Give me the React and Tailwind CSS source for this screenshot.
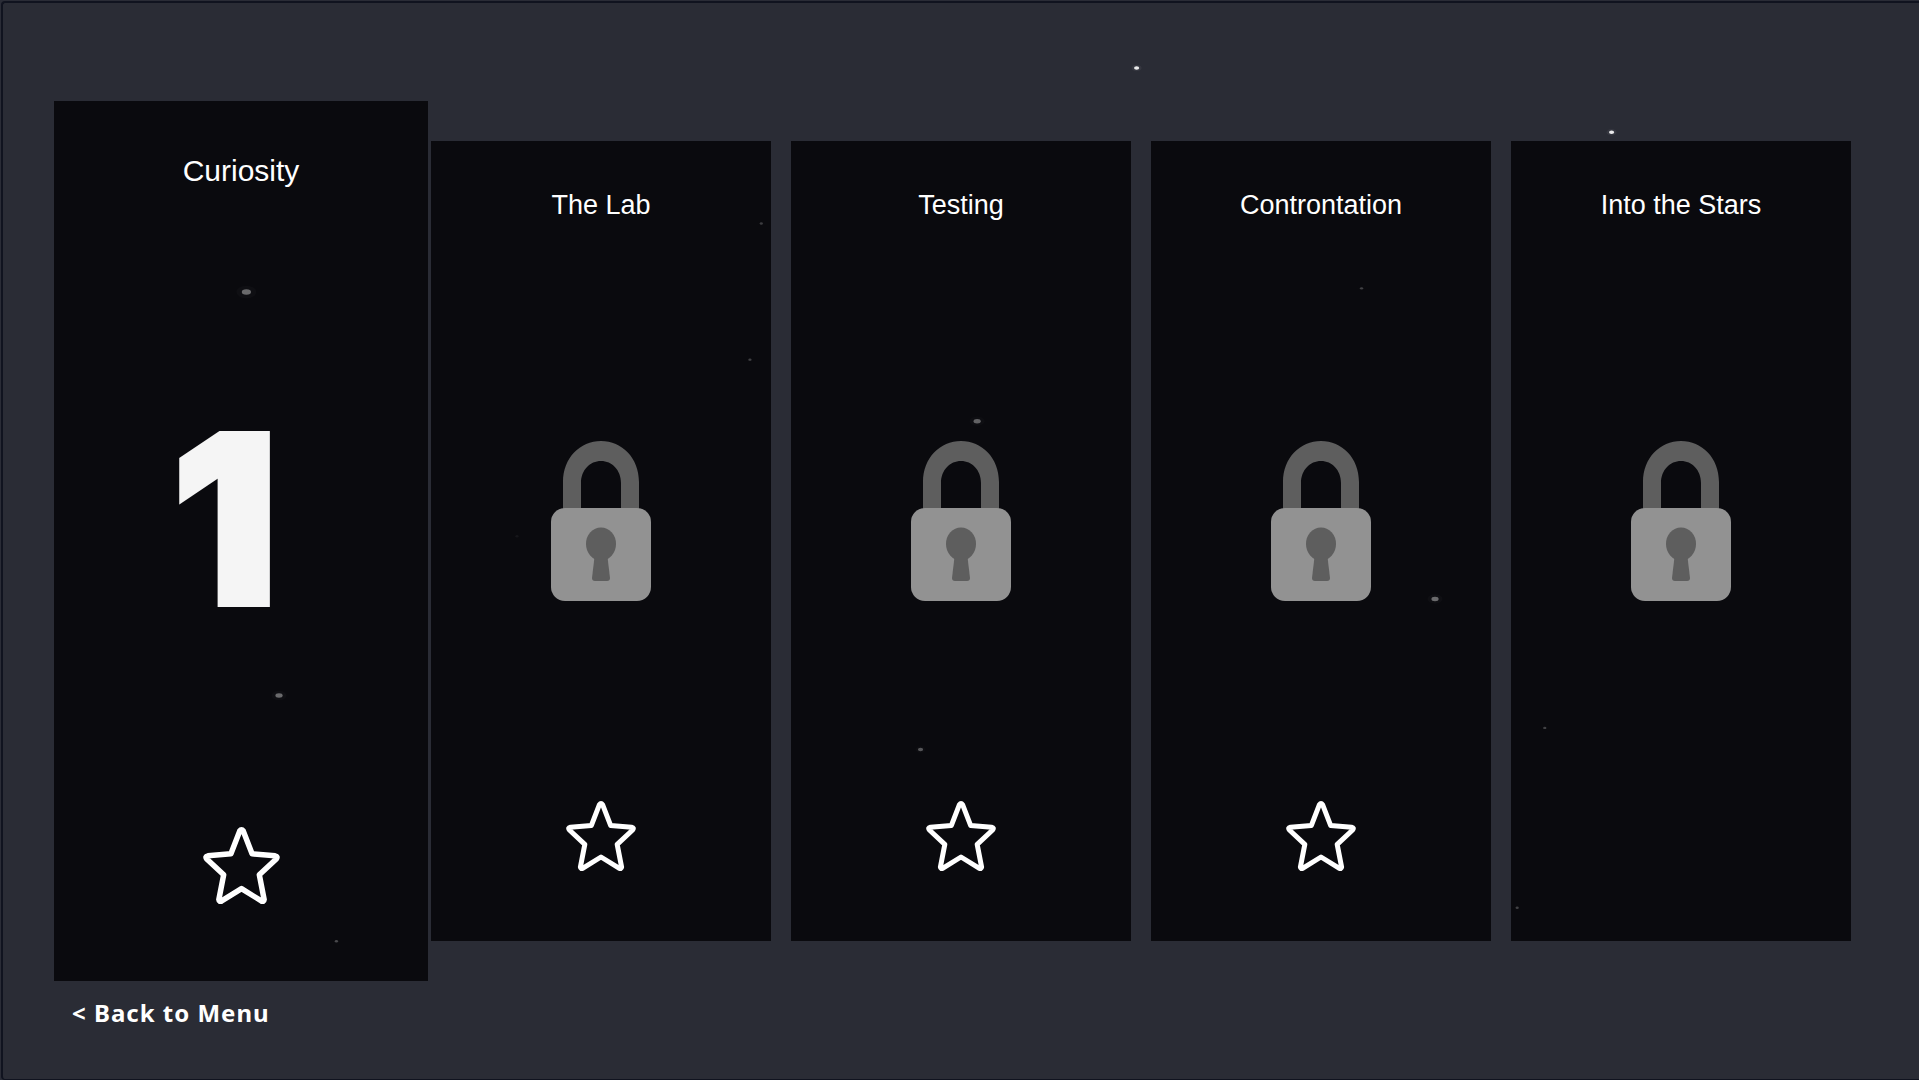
import React from 'react'

const levels = [
    { title: "Curiosity", unlocked: true, star: true },
    { title: "The Lab", unlocked: false, star: true },
    { title: "Testing", unlocked: false, star: true },
    { title: "Controntation", unlocked: false, star: true },
    { title: "Into the Stars", unlocked: false, star: false },
];

// positions are in percent of the sky, r in pixels
const sky = [
    { x: 59.23, y: 6.3, r: 2, o: 0.9 },
    { x: 83.98, y: 12.25, r: 2, o: 0.9 },
    { x: 12.84, y: 27.04, r: 4, o: 0.38 },
    { x: 14.54, y: 64.4, r: 3, o: 0.38 },
    { x: 50.92, y: 39, r: 3, o: 0.35 },
    { x: 47.97, y: 69.4, r: 2, o: 0.3 },
    { x: 74.78, y: 55.46, r: 3, o: 0.38 },
    { x: 80.5, y: 67.4, r: 1, o: 0.22 },
    { x: 79.06, y: 84.05, r: 1, o: 0.22 },
    { x: 17.53, y: 87.15, r: 1, o: 0.25 },
    { x: 39.67, y: 20.7, r: 1, o: 0.2 },
    { x: 39.08, y: 33.3, r: 1, o: 0.22 },
    { x: 70.95, y: 26.7, r: 1, o: 0.22 },
    { x: 26.94, y: 49.65, r: 1, o: 0.05 },
];

const Sky = () => (
    <svg className="pointer-events-none absolute inset-0 h-full w-full" aria-hidden="true">
        {sky.map((s, i) => (
            <g key={i} fill="#fff">
                <ellipse cx={`${s.x}%`} cy={`${s.y}%`} rx={s.r * 2.5} ry={s.r * 1.6} opacity={s.o * 0.06} />
                <ellipse cx={`${s.x}%`} cy={`${s.y}%`} rx={s.r + 0.6} ry={s.r * 0.5 + 0.7} opacity={s.o} />
            </g>
        ))}
    </svg>
)

const Star = ({ className }) => (
    <svg viewBox="0 0 70 70" className={className} fill="none" stroke="#fff" strokeWidth="5" strokeLinejoin="round" aria-hidden="true">
        <path d="M33.4 3.6Q35 1.4 36.6 3.6L44.6 24.4L65.6 26.2Q68.4 26.8 66.6 29L51.2 43.4L55.6 66Q55.4 68.4 53 67.2L35 56L17 67.2Q14.6 68.4 14.4 66L18.8 43.4L3.4 29Q1.6 26.8 4.4 26.2L25.4 24.4Z" />
    </svg>
)

const Lock = () => (
    <svg viewBox="0 0 100 160" className="mt-[216px] h-[160px] w-[100px]" aria-hidden="true">
        <path d="M12 68V41C12 17 29 0 50 0S88 17 88 41V68H70V42C70 29 61 20 50 20S30 29 30 42V68Z" fill="#5e5e5e" />
        <rect x="0" y="67" width="100" height="93" rx="14" fill="#929292" />
        <ellipse cx="50" cy="103" rx="15" ry="16.5" fill="#5e5e5e" />
        <path d="M43.5 116H56.5L59 137Q59 140 56 140H44Q41 140 41 137Z" fill="#5e5e5e" />
    </svg>
)

const LevelCard = ({ level, number }) => {
    if (level.unlocked) {
        return (
            <button type="button" className="-mx-[17px] -my-10 flex flex-col items-center bg-[#0a0a0e] pt-12 pb-[77px]">
                <span className="text-[30px] leading-[44px]">{level.title}</span>
                <span className="mt-[205px] pr-8 font-['Inter',sans-serif] text-[234px] leading-[242px] font-black text-[#f5f5f5] [-webkit-text-stroke:6px_#f5f5f5]">{number}</span>
                <Star className="mt-[187px] h-[77px] w-[77px]" />
            </button>
        )
    }
    return (
        <button type="button" className="flex flex-col items-center bg-[#0a0a0e] pt-11 pb-[70px]">
            <span className="text-[27px] leading-10">{level.title}</span>
            <Lock />
            {level.star && <Star className="mt-[200px] h-[70px] w-[70px]" />}
        </button>
    )
}

const App = () => {
    return (
        <div className="relative flex min-h-screen flex-col bg-[#2a2c36] pt-px pl-px font-['Liberation_Sans',Arial,sans-serif] text-white">
            <main className="flex-1 rounded-l-sm border-t-2 border-b border-l-2 border-[#10131f] bg-[#2a2c35] px-[68px] pt-[138px] pb-12">
                <div className="grid grid-cols-5 gap-5">
                    {levels.map((level, i) => (
                        <LevelCard key={level.title} level={level} number={i + 1} />
                    ))}
                </div>
                <button type="button" className="mt-14 pl-px font-['Noto_Sans',sans-serif] text-2xl font-bold tracking-[1px]">
                    &lt; Back to Menu
                </button>
            </main>
            <Sky />
        </div>
    )
}

export default App
